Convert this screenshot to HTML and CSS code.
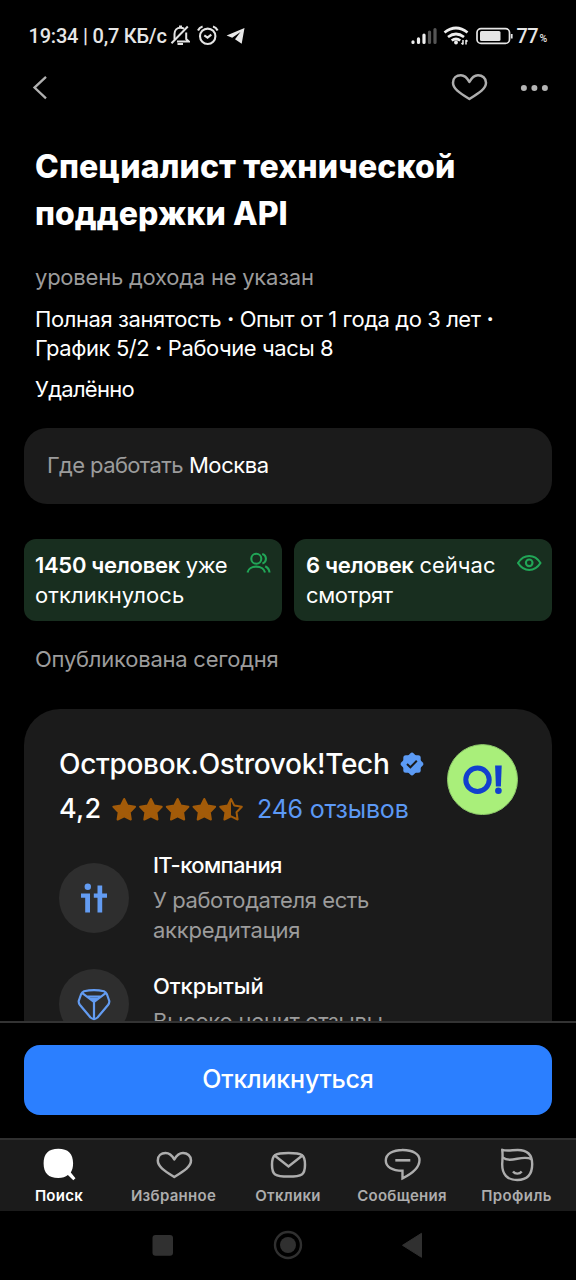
FILE: index.html
```html
<!DOCTYPE html>
<html lang="ru">
<head>
<meta charset="utf-8">
<title>Специалист технической поддержки API</title>
<link rel="stylesheet" href="styles.css">
</head>
<body>
<div class="screen">
  <div class="status">
    <div class="status-left">
      <span class="clock">19:34 | 0,7 КБ/с</span>
      <svg class="i-bell" width="20" height="22" viewBox="170 25 20 22" fill="none" stroke="#e4e4e4" stroke-width="2"><path d="M174.500 39.500V34c0-4 2.500-6.300 6-6.300 1.400 0 2.500.4 3.500 1M186.200 32.500V39l2.600 2.400H177"/><path d="M187.800 26.500L171.500 43.200"/><path d="M177.500 44h5.500M179 26.600h3"/></svg>
      <svg class="i-alarm" width="22" height="22" viewBox="197 25 22 22" fill="none" stroke="#e4e4e4" stroke-width="2.100"><circle cx="207.700" cy="36.300" r="7.700"/><path d="M204.300 35.300l3.200 2.300 3.800-3"/><path d="M198 30.500q1.300-3 4.600-4M217.600 30.500q-1.300-3-4.600-4"/></svg>
      <svg class="i-tg" width="19" height="18" viewBox="226 27 19 18"><path fill="#e8e8e8" d="M226.600 35.400L244.500 28 241.700 43.700 235 39.200 240.500 32 232.200 37.700z"/></svg>
    </div>
    <div class="status-right">
      <svg width="27" height="18" viewBox="411 27 27 18" stroke-width="3.200" stroke-linecap="round"><path stroke="#eee" d="M413 42.400v-.6M418.500 42.400v-3.500M424 42.400V35"/><path stroke="#555" d="M429.500 42.400V32M435 42.400V29.500"/></svg>
      <svg class="i-wifi" width="26" height="20" viewBox="443 26 26 20" fill="none" stroke="#eee" stroke-width="2.700"><path d="M444.500 32.500q11.500-9 23 0M448 37q8-6 16 0M451.700 40.500q4.300-3 8.600 0"/><circle cx="456" cy="42.500" r="1.900" fill="#eee" stroke="none"/><path stroke-width="1.500" d="M463 40v4.500M466 40v4.500M461.500 43l1.500 1.500M467.500 41.500L466 40"/></svg>
      <svg class="i-bat" width="38" height="18" viewBox="476 26 38 18"><rect x="477" y="27.600" width="32.500" height="14.800" rx="4" fill="none" stroke="#e6e6e6" stroke-width="1.700"/><rect x="480" y="30" width="20.500" height="10" rx="1.500" fill="#e6e6e6"/><path d="M511.700 33v4.500" stroke="#e6e6e6" stroke-width="1.800"/></svg>
      <span class="pct">77</span><span class="pct-sign">%</span>
    </div>
  </div>
  <div class="topbar">
    <svg width="16" height="26" viewBox="31 75 16 26" fill="none" stroke="#b0b0b0" stroke-width="2.300"><path d="M46 76.800L34.500 87.600 46 98.400"/></svg>
    <span class="grow"></span>
    <svg width="38" height="30" viewBox="451 73 38 30" fill="none" stroke="#adadad" stroke-width="2.500" stroke-linejoin="round"><path d="M469.400 99C459 92.500 453 88.500 453 82.700 453 78 456.500 75.200 460.800 75.200 464.500 75.200 467.300 78 469.400 82 471.500 78 474.300 75.200 478 75.200 482.300 75.200 486 78 486 82.700 486 88.500 479.800 92.500 469.400 99z"/></svg>
    <svg class="i-more" width="28" height="8" viewBox="520 83.500 28 8" fill="#b5b5b5"><circle cx="523.900" cy="87.500" r="3"/><circle cx="534.400" cy="87.500" r="3"/><circle cx="544.900" cy="87.500" r="3"/></svg>
  </div>

  <main class="content">
    <h1 class="title"><span>Специалист технической</span><span class="title-end">поддержки API</span></h1>
    <p class="salary">уровень дохода не указан</p>
    <p class="terms"><span>Полная занятость <b>·</b> Опыт от 1 года до 3 лет <b>·</b></span><span>График 5/2 <b>·</b> Рабочие часы 8</span></p>
    <p class="remote">Удалённо</p>

    <div class="place"><span class="place-label">Где работать</span><span class="place-city">Москва</span></div>

    <div class="stats">
      <div class="stat">
        <p><span><strong>1450 человек</strong> уже</span><span class="loose">откликнулось</span></p>
        <svg width="26" height="24" viewBox="246 551 26 24" fill="none" stroke="#21a657" stroke-width="2.100"><circle cx="256.300" cy="558.700" r="5"/><path d="M262.200 553.900a5 5 0 0 1 .2 9.600M247.500 572.500c1.300-7.800 16.200-7.800 17.500 0M265.200 566.300c2.500 1.200 4 3.200 4.300 6.200"/></svg>
      </div>
      <div class="stat">
        <p><span><strong>6 человек</strong> <i>сейчас</i></span><span>смотрят</span></p>
        <svg width="26" height="24" viewBox="516 551 26 24" fill="none" stroke="#21a657" stroke-width="2.100"><path d="M518 563c6-9.300 16.500-9.300 22.500 0-6 9.300-16.500 9.300-22.500 0z" stroke-linejoin="round"/><circle cx="529.200" cy="562.800" r="3.300"/></svg>
      </div>
    </div>

    <p class="published">Опубликована сегодня</p>

    <section class="company">
      <div class="company-head">
        <div>
          <div class="name-row"><span class="name">Островок.Ostrovok!Tech</span>
            <svg width="24" height="24" viewBox="-12 -12 24 24"><g fill="#5c9bf5"><rect x="-8.700" y="-8.700" width="17.400" height="17.400" rx="2.500"/><rect x="-8.700" y="-8.700" width="17.400" height="17.400" rx="2.500" transform="rotate(45)"/></g><path d="M-5 0l3.400 3.300L4.800-3.200" fill="none" stroke="#1b1b1b" stroke-width="2"/></svg>
          </div>
          <div class="rating">
            <span class="score">4,2</span>
            <svg class="stars" width="132" height="26" viewBox="112 795 132 26">
              <defs><path id="star" d="M0-10.500L3.300-3.900 10.800-2.700 5.500 2.700 6.600 10 0 6.800-6.600 10-5.500 2.700-10.800-2.700-3.300-3.900z" stroke-width="2" stroke-linejoin="round"/></defs>
              <g fill="#a35b09" stroke="#a35b09"><use href="#star" x="124.200" y="808.500"/><use href="#star" x="150.900" y="808.500"/><use href="#star" x="177.600" y="808.500"/><use href="#star" x="204.300" y="808.500"/><use href="#star" x="231" y="808.500" fill="none"/><path stroke="none" d="M231 798v17.300l-6.600 3.200 1.100-7.300-5.300-5.400 7.500-1.200z"/></g>
            </svg>
            <span class="reviews">246 отзывов</span>
          </div>
        </div>
        <svg class="logo" width="71" height="71" viewBox="446.500 744 71 71"><circle cx="482" cy="779.600" r="35" fill="#a9ef7a" stroke="#8cc66a"/><circle cx="477" cy="779.700" r="11.700" fill="none" stroke="#123fce" stroke-width="5"/><path fill="#123fce" d="M494.600 765.500h6.600l-.8 21h-5z"/><circle cx="497.900" cy="790.800" r="3.300" fill="#123fce"/></svg>
      </div>

      <div class="feature">
        <svg width="70" height="70" viewBox="59 862.500 70 70"><circle cx="94" cy="897.500" r="35" fill="#2e2e2e"/><g fill="#639cf2"><circle cx="87.800" cy="886.200" r="3.200"/><path d="M81 893h9v19h-4.800v-14.800H81zM97.500 885h4.700v8h4.800v4.200h-4.800V912h-4.700v-14.800h-3.700V893h3.700z"/></g></svg>
        <div><h2 class="tight">IT-компания</h2><p><span class="emp">У работодателя есть</span><span>аккредитация</span></p></div>
      </div>
      <div class="feature">
        <svg width="70" height="70" viewBox="59 968 70 70"><circle cx="94" cy="1003" r="35" fill="#2e2e2e"/><g fill="none" stroke="#639cf2" stroke-width="2.200" stroke-linejoin="round"><path d="M84 990.300Q94 987.800 104 990.300 106 991 107 993.500L109.300 1000Q109.500 1002 108 1004L97.500 1016.500Q94 1019.500 90.500 1016.500L80 1004Q78.500 1002 78.700 1000L81 993.500Q82 991 84 990.300z"/><path d="M82 991.800l12 9.200 12-9.200M94 1000v18M87 995.500h14"/></g><path fill="#639cf2" d="M88 996.500h12l-6 5z"/></svg>
        <div><h2 class="open">Открытый</h2><p><span>Высоко ценит отзывы</span></p></div>
      </div>
    </section>
  </main>

  <div class="apply"><button type="button">Откликнуться</button></div>

  <nav class="tabs">
    <a class="tab active"><svg width="40" height="36" viewBox="39 1146 40 36"><path fill="#fff" d="M58.300 1148.700c10 0 14.800 4.800 14.800 14.600 0 4-.8 6.900-2.300 9.200l4.700 5.800-2.200 2-5.400-5.200c-2.300 2-5.500 2.900-9.600 2.900-9.900 0-14.700-4.900-14.700-14.700s4.800-14.600 14.700-14.600z"/></svg><span>Поиск</span></a>
    <a class="tab"><svg width="40" height="36" viewBox="153.500 1146 40 36" fill="none" stroke="#adadad" stroke-width="2.500" stroke-linejoin="round"><path d="M173.800 1177C163.400 1170.500 157.300 1166.500 157.300 1160.500 157.300 1155.800 160.800 1153 165.100 1153 168.800 1153 171.600 1155.500 173.800 1159.500 176 1155.500 178.800 1153 182.500 1153 186.800 1153 190.500 1155.800 190.500 1160.500 190.500 1166.500 184.200 1170.500 173.800 1177z"/></svg><span>Избранное</span></a>
    <a class="tab"><svg width="40" height="36" viewBox="267.500 1146 40 36" fill="none" stroke="#adadad" stroke-width="2.500"><path d="M288 1153c-13.500 0-16.500 1.500-16.500 11.700s3 11.800 16.500 11.800 16.500-1.600 16.500-11.800-3-11.700-16.500-11.700z"/><path d="M273.500 1155l14.500 11.500 14.500-11.500"/></svg><span>Отклики</span></a>
    <a class="tab"><svg width="40" height="36" viewBox="381.500 1146 40 36" fill="none" stroke="#adadad" stroke-width="2.400"><path d="M402.200 1150c10 0 16.800 3.800 16.800 10 0 8-7.500 13.700-17 18.300v-7.600c-10.500 0-16.700-3.900-16.700-10.200 0-6.500 6.900-10.500 16.900-10.500z"/><path d="M394.800 1160.300h15" stroke-width="2.600"/></svg><span>Сообщения</span></a>
    <a class="tab"><svg width="40" height="36" viewBox="496 1146 40 36" fill="none" stroke="#adadad" stroke-width="2.400" stroke-linejoin="round"><path d="M501.200 1149.800c5 1.700 10 .2 15.500.2 10 0 14.500 4.600 14.500 14 0 10.300-5 16-15 16s-15.200-5.700-15-16c.2-4.500.8-9 0-14.200z"/><path d="M501.500 1157.500c9 6.500 19-3.300 29.200 1.700M512 1171.500c2.200 2.800 6.500 2.800 8.700 0"/></svg><span class="wide">Профиль</span></a>
  </nav>

  <div class="sysnav">
    <svg width="22" height="30" viewBox="152 1230 22 30"><rect x="152.500" y="1235" width="20.500" height="20.800" rx="3" fill="#303030"/></svg>
    <svg width="30" height="30" viewBox="272.500 1230.300 30 30"><circle cx="287.500" cy="1245.300" r="13" fill="none" stroke="#303030" stroke-width="2.400"/><circle cx="287.500" cy="1245.300" r="8" fill="#303030"/></svg>
    <svg width="22" height="30" viewBox="401 1230 22 30"><path fill="#303030" stroke="#303030" stroke-linejoin="round" d="M402.500 1245.300L421.500 1233.300v24z"/></svg>
  </div>
</div>
</body>
</html>
```
FILE: styles.css
```css
* { box-sizing: border-box; }
body { margin: 0; background: #000; color: #fff; font-family: Inter, "Liberation Sans", sans-serif; }
h1, h2, p { margin: 0; font-weight: 400; }
svg { display: block; flex: none; }
.grow { flex: 1; }

.screen { width: 576px; height: 1280px; display: flex; flex-direction: column; overflow: hidden; }

.status { height: 64px; padding: 8px 28px 0 28px; display: flex; justify-content: space-between; align-items: center; font-family: Roboto, sans-serif; color: #e6e6e6; }
.status-left, .status-right { display: flex; align-items: center; white-space: nowrap; }
.clock { width: 142px; padding-left: 0.500px; font-size: 20px; font-weight: 500; letter-spacing: -0.21px; }
.i-alarm { margin-left: 7px; }
.i-tg { margin-left: 7px; }
.status-right { width: 137px; }
.i-wifi { margin-left: 5px; }
.i-bat { margin-left: 7px; }
.pct { width: 23px; margin-left: 2.500px; font-size: 20px; font-weight: 500; letter-spacing: -0.600px; }
.pct-sign { width: 8px; font-size: 10.500px; font-weight: 500; padding-top: 5px; }

.topbar { height: 48px; padding: 0 28px 0 31px; display: flex; align-items: center; }
.i-more { margin-left: 31px; }

.content { flex: 1; min-height: 0; overflow: hidden; padding: 32.400px 24px 0; font-size: 22px; line-height: 29.300px; white-space: nowrap; }
.content > h1, .content > p { padding-left: 11px; }
.title span, .terms span, .stat p > span, .feature p span { display: block; }
.title { font-size: 32px; line-height: 46.500px; font-weight: 800; letter-spacing: 0.130px; }
.title-end { letter-spacing: 0.050px; }
.salary { margin-top: 25.300px; color: #9c9c9c; letter-spacing: -0.230px; }
.terms { margin-top: 13.200px; letter-spacing: -0.420px; }
.terms b { font-weight: 700; }
.remote { margin-top: 11.400px; letter-spacing: -0.700px; }

.place { margin-top: 24px; height: 75.500px; padding: 0 23px 2px; display: flex; align-items: center; gap: 6px; border-radius: 23px; background: #1b1b1b; }
.place-label { color: #9c9c9c; letter-spacing: -0.620px; }
.place-city { letter-spacing: -0.400px; }

.stats { margin-top: 35.500px; display: grid; grid-template-columns: 1fr 1fr; gap: 12px; }
.stat { height: 81.700px; padding: 12px 10px 0 11px; display: flex; justify-content: space-between; border-radius: 12px; background: #182e1f; line-height: 29.600px; letter-spacing: -0.350px; }
.stat + .stat { padding-left: 12px; }
.stat strong { font-weight: 600; letter-spacing: -0.300px; }
.stat i { font-style: normal; letter-spacing: 0; }
.stat .loose { letter-spacing: 0.080px; }
.published { margin-top: 24px; color: #9c9c9c; letter-spacing: -0.240px; }

.company { margin-top: 35px; padding: 35px 34.500px 35px 35px; border-radius: 36px; background: #1b1b1b; }
.company-head { display: flex; justify-content: space-between; }
.name-row { display: flex; align-items: center; height: 36px; margin-top: 1.500px; gap: 11px; }
.name { font-size: 28px; line-height: 36px; font-weight: 500; letter-spacing: -0.320px; }
.rating { display: flex; align-items: center; height: 36px; margin-top: 9px; line-height: 36px; }
.score { width: 53px; font-size: 27px; font-weight: 500; letter-spacing: 0.300px; }
.reviews { margin-left: 13px; font-size: 25px; color: #5c99f5; letter-spacing: -0.200px; }

.feature { display: flex; align-items: center; gap: 24px; margin-top: 24px; }
.feature h2 { font-size: 22px; font-weight: 500; margin-bottom: 6px; }
.feature .tight { letter-spacing: -0.640px; }
.feature .open { letter-spacing: -0.050px; }
.feature p { color: #9c9c9c; letter-spacing: -0.250px; }
.feature .emp { letter-spacing: -0.400px; }

.apply { height: 117px; flex: none; padding: 22px 24px 0; border-top: 2px solid #333; }
.apply button { display: block; width: 100%; height: 70px; padding: 0 0 2px; border: 0; border-radius: 16px; background: #2b7fff; color: #fff; font: 500 25px/68px Inter, "Liberation Sans", sans-serif; letter-spacing: -0.200px; }

.tabs { height: 73px; flex: none; border-top: 2px solid #303030; background: #1b1b1b; display: grid; grid-template-columns: 118px 111px 118px 110px 119px; }
.tab { padding-top: 6px; display: flex; flex-direction: column; align-items: center; color: #adadad; font-size: 15px; line-height: 18px; font-weight: 600; letter-spacing: 0.280px; }
.tab span { margin-top: 5px; white-space: nowrap; }
.tab .wide { letter-spacing: 0.400px; }
.tab.active { color: #fff; }

.sysnav { height: 69px; flex: none; padding: 0 153px 1px 152px; display: flex; justify-content: space-between; align-items: center; }
```
